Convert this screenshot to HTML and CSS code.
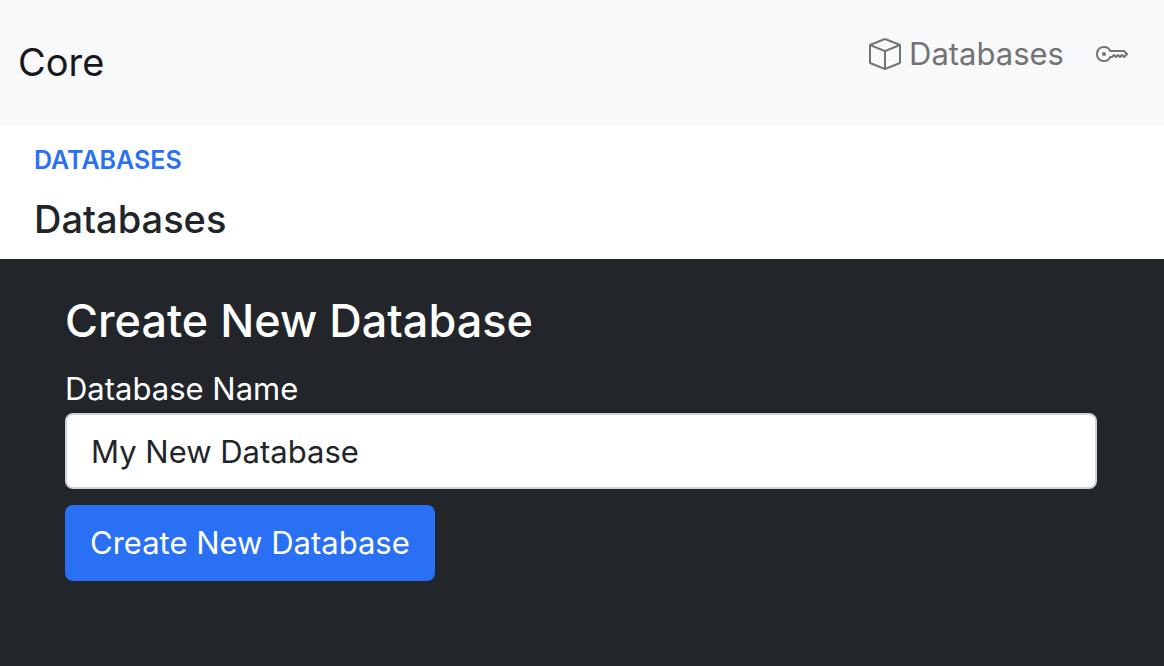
FILE: index.html
```html
<!DOCTYPE html>
<html lang="en">
<head>
<meta charset="utf-8">
<meta name="viewport" content="width=device-width, initial-scale=1">
<title>Core - Databases</title>
<link rel="stylesheet" href="styles.css">
</head>
<body>
<header class="navbar">
  <a class="brand" href="#">Core</a>
  <nav class="nav">
    <a class="nav-link" href="#">
      <svg class="icon" viewBox="0 0 16 16" fill="currentColor" aria-hidden="true"><path d="M8.186 1.113a.5.500 0 0 0-.372 0L1.846 3.500 8 5.961 14.154 3.500 8.186 1.113zM15 4.239l-6.500 2.600v7.922l6.500-2.600V4.240zM7.500 14.762V6.838L1 4.239v7.923l6.500 2.600zM7.443.184a1.500 1.500 0 0 1 1.114 0l7.129 2.852A.5.500 0 0 1 16 3.500v8.662a1 1 0 0 1-.629.928l-7.185 2.874a.5.500 0 0 1-.372 0L.63 13.090a1 1 0 0 1-.630-.928V3.500a.5.500 0 0 1 .314-.464L7.443.184z"/></svg>
      <span>Databases</span>
    </a>
    <a class="nav-link" href="#" aria-label="Keys">
      <svg class="icon" viewBox="0 0 16 16" fill="currentColor" aria-hidden="true"><path d="M0 8a4 4 0 0 1 7.465-2H14a.5.500 0 0 1 .354.146l1.500 1.500a.5.500 0 0 1 0 .708l-1.500 1.500a.5.500 0 0 1-.708 0L13 9.207l-.646.647a.5.500 0 0 1-.708 0L11 9.207l-.646.647a.5.500 0 0 1-.708 0L9 9.207l-.646.647A.5.500 0 0 1 8 10h-.535A4 4 0 0 1 0 8zm4-3a3 3 0 1 0 2.712 4.285A.5.500 0 0 1 7.163 9h.630l.853-.854a.5.500 0 0 1 .708 0l.646.647.646-.647a.5.500 0 0 1 .708 0l.646.647.646-.647a.5.500 0 0 1 .708 0l.646.647.793-.793-1-1h-6.630a.5.500 0 0 1-.451-.285A3 3 0 0 0 4 5z"/><circle cx="4" cy="8" r="1"/></svg>
    </a>
  </nav>
</header>
<main>
  <div class="page-head">
    <p class="eyebrow">Databases</p>
    <h1 class="page-title">Databases</h1>
  </div>
  <form class="panel">
    <h2 class="panel-title">Create New Database</h2>
    <label class="label" for="name">Database Name</label>
    <input class="input" id="name" type="text" value="My New Database">
    <button class="button" type="button">Create New Database</button>
  </form>
</main>
</body>
</html>
```
FILE: styles.css
```css
* {
  box-sizing: border-box;
}

body {
  margin: 0;
  min-height: 100vh;
  display: flex;
  flex-direction: column;
  background: #fff;
  color: #212529;
  font-family: Inter, "Liberation Sans", sans-serif;
  font-size: 31px;
  line-height: 48px;
}

.navbar {
  display: flex;
  justify-content: space-between;
  align-items: flex-start;
  padding: 30px 36px 36px 18px;
  background: #f8f9fa;
}

.brand {
  padding-top: 4px;
  color: #16181b;
  font-size: 38px;
  line-height: 56px;
  text-decoration: none;
}

.nav {
  display: flex;
  gap: 32px;
}

.nav-link {
  display: flex;
  align-items: center;
  gap: 8px;
  color: #727374;
  text-decoration: none;
}

.icon {
  display: block;
  width: 32px;
  height: 32px;
}

main {
  flex: 1;
  display: flex;
  flex-direction: column;
}

.page-head {
  padding: 16px 34px;
}

.eyebrow {
  margin: 0;
  color: #2970f4;
  font-size: 25px;
  font-weight: 600;
  line-height: 37px;
  text-transform: uppercase;
}

.page-title {
  margin: 16px 0 0;
  font-size: 38px;
  font-weight: 500;
  line-height: 48px;
}

.panel {
  flex: 1;
  display: flex;
  flex-direction: column;
  align-items: flex-start;
  padding: 34px 67px 64px 65px;
  background: #22262a;
  color: #fff;
}

.panel-title {
  margin: 0 0 16px;
  font-size: 45px;
  font-weight: 500;
  line-height: 56px;
}

.label {
  display: block;
}

.input {
  width: 100%;
  height: 76px;
  padding: 0 24px;
  border: 2px solid #ced4da;
  border-radius: 8px;
  background: #fff;
  color: #212529;
  font: inherit;
}

.button {
  height: 76px;
  margin-top: 16px;
  padding: 0 25px;
  border: 0;
  border-radius: 8px;
  background: #2970f4;
  color: #fff;
  font: inherit;
}
```
